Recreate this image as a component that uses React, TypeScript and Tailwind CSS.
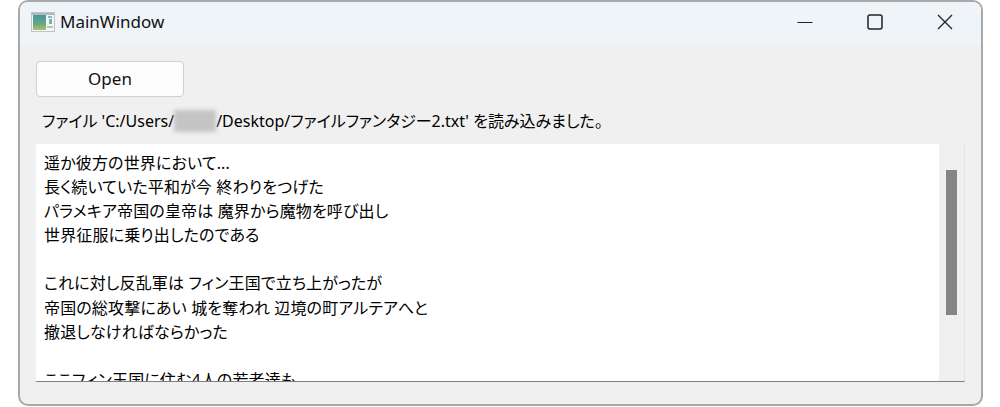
const JP_FONT = "font-['Noto_Sans','Noto_Sans_CJK_JP',sans-serif]"

const LINES = [
  '遥か彼方の世界において...',
  '長く続いていた平和が今 終わりをつげた',
  'パラメキア帝国の皇帝は 魔界から魔物を呼び出し',
  '世界征服に乗り出したのである',
  '',
  'これに対し反乱軍は フィン王国で立ち上がったが',
  '帝国の総攻撃にあい 城を奪われ 辺境の町アルテアへと',
  '撤退しなければならかった',
  '',
  'ここフィン王国に住む4人の若者達も',
]

function AppIcon() {
  return (
    <svg width="24" height="20" viewBox="0 0 24 20" className="shrink-0">
      <defs>
        <linearGradient id="pane" x1="0" y1="0" x2="0" y2="1">
          <stop offset="0" stopColor="#4a95a4" />
          <stop offset="0.6" stopColor="#62ab80" />
          <stop offset="1" stopColor="#aebf70" />
        </linearGradient>
      </defs>
      <rect x="0.5" y="0.5" width="23" height="19" fill="#f4f6f6" stroke="#c0c4c4" />
      <rect x="1" y="1" width="22" height="2" fill="#b0babd" />
      <rect x="2" y="3" width="13" height="15" fill="url(#pane)" />
      <rect x="17" y="4" width="4" height="2" fill="#8fb2be" />
      <rect x="18" y="7" width="3" height="5" fill="#7ab89a" />
      <rect x="16" y="14" width="6" height="2" fill="#bcc0c0" />
    </svg>
  )
}

function TitleBar() {
  return (
    <div className="flex h-[43px] shrink-0 items-center bg-[#eff4f9] pb-[3px] pl-[11px]">
      <AppIcon />
      <span className="ml-[5px] text-[17px] text-[#111]">MainWindow</span>
      <div className="ml-auto flex items-center pr-[1px]">
        <div className="flex h-[40px] w-[70px] items-center justify-center">
          <svg width="16" height="16" viewBox="0 0 16 16">
            <path d="M0.5 8.5H15.5" stroke="#222" strokeWidth="1" />
          </svg>
        </div>
        <div className="flex h-[40px] w-[70px] items-center justify-center">
          <svg width="16" height="16" viewBox="0 0 16 16">
            <rect x="1" y="1" width="14" height="14" rx="2" fill="none" stroke="#222" strokeWidth="1.5" />
          </svg>
        </div>
        <div className="flex h-[40px] w-[70px] items-center justify-center">
          <svg width="16" height="16" viewBox="0 0 16 16">
            <path d="M1 1L15 15M15 1L1 15" stroke="#222" strokeWidth="1.3" />
          </svg>
        </div>
      </div>
    </div>
  )
}

export default function App() {
  return (
    <div className={`h-[407px] w-[1000px] overflow-hidden bg-white [font-feature-settings:'palt'] ${JP_FONT}`}>
      <div className="ml-[18px] flex h-[406px] w-[965px] flex-col overflow-hidden rounded-[10px] border-2 border-[#a9a9a9] bg-[#f0f0f0]">
        <TitleBar />
        <div className="flex min-h-0 flex-1 flex-col px-[16px]">
          <button className="mt-[16px] h-[36px] w-[148px] shrink-0 rounded-[4px] border border-[#d0d0d0] bg-[#fdfdfd] text-[17px] text-[#111]">
            Open
          </button>
          <div className="mt-[12px] flex h-[23px] shrink-0 items-center pl-[6px] text-[16px] whitespace-nowrap text-black">
            ファイル 'C:/Users/
            <span className="h-[22px] w-[42px] bg-[#c4c4c4] blur-[2px]" />
            /Desktop/ファイルファンタジー2.txt' を読み込みました。
          </div>
          <div className="mt-[12px] flex h-[238px] w-[929px] shrink-0 border-b border-b-[#808080] border-r border-r-[#e4e4e4]">
            <div className="min-w-0 flex-1 overflow-hidden bg-white pl-[8px] pt-[7px] text-[16px] leading-[24.1px] tracking-[0.15px] text-black">
              {LINES.map((line, i) => (
                <div key={i} className="h-[24.1px] whitespace-nowrap">{line}</div>
              ))}
            </div>
            <div className="w-[25px] shrink-0 bg-[#f0f0f0] pl-[7px] pt-[26px]">
              <div className="h-[145px] w-[11px] bg-[#858585]" />
            </div>
          </div>
        </div>
      </div>
    </div>
  )
}
